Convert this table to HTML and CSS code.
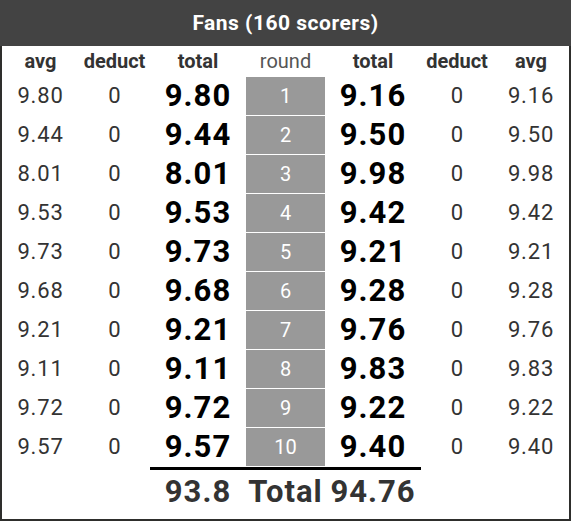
FILE: index.html
```html
<!DOCTYPE html>
<html>
<head>
<meta charset="utf-8">
<link rel="stylesheet" href="styles.css">
</head>
<body>
<div class="card">
  <div class="title">Fans (160 scorers)</div>
  <div class="table">
    <div class="th">avg</div>
    <div class="th">deduct</div>
    <div class="th">total</div>
    <div class="th light">round</div>
    <div class="th">total</div>
    <div class="th">deduct</div>
    <div class="th">avg</div>

    <div class="avg">9.80</div><div class="ded">0</div><div class="tot">9.80</div><div class="rnd">1</div><div class="tot">9.16</div><div class="ded">0</div><div class="avg">9.16</div>
    <div class="avg">9.44</div><div class="ded">0</div><div class="tot">9.44</div><div class="rnd">2</div><div class="tot">9.50</div><div class="ded">0</div><div class="avg">9.50</div>
    <div class="avg">8.01</div><div class="ded">0</div><div class="tot">8.01</div><div class="rnd">3</div><div class="tot">9.98</div><div class="ded">0</div><div class="avg">9.98</div>
    <div class="avg">9.53</div><div class="ded">0</div><div class="tot">9.53</div><div class="rnd">4</div><div class="tot">9.42</div><div class="ded">0</div><div class="avg">9.42</div>
    <div class="avg">9.73</div><div class="ded">0</div><div class="tot">9.73</div><div class="rnd">5</div><div class="tot">9.21</div><div class="ded">0</div><div class="avg">9.21</div>
    <div class="avg">9.68</div><div class="ded">0</div><div class="tot">9.68</div><div class="rnd">6</div><div class="tot">9.28</div><div class="ded">0</div><div class="avg">9.28</div>
    <div class="avg">9.21</div><div class="ded">0</div><div class="tot">9.21</div><div class="rnd">7</div><div class="tot">9.76</div><div class="ded">0</div><div class="avg">9.76</div>
    <div class="avg">9.11</div><div class="ded">0</div><div class="tot">9.11</div><div class="rnd">8</div><div class="tot">9.83</div><div class="ded">0</div><div class="avg">9.83</div>
    <div class="avg">9.72</div><div class="ded">0</div><div class="tot">9.72</div><div class="rnd">9</div><div class="tot">9.22</div><div class="ded">0</div><div class="avg">9.22</div>
    <div class="avg">9.57</div><div class="ded">0</div><div class="tot">9.57</div><div class="rnd">10</div><div class="tot">9.40</div><div class="ded">0</div><div class="avg">9.40</div>

    <div class="blank"></div><div class="blank"></div>
    <div class="sum">93.8</div><div class="sum">Total</div><div class="sum">94.76</div>
    <div class="blank"></div><div class="blank"></div>
  </div>
</div>
</body>
</html>
```
FILE: styles.css
```css
html, body {
  margin: 0;
  padding: 0;
  background: #fff;
}
.card {
  width: 571px;
  box-sizing: border-box;
  border: 2px solid #2e2e2c;
  border-top: 0;
  font-family: Roboto, "Liberation Sans", sans-serif;
}
.title {
  height: 46px;
  line-height: 46px;
  background: #434343;
  color: #fff;
  font-weight: 700;
  font-size: 21px;
  letter-spacing: 0.5px;
  text-align: center;
  margin: 0 -2px;
}
.table {
  display: grid;
  grid-template-columns: 77px 71px 96px 79px 96px 72px 76px;
  grid-template-rows: 30px repeat(10, 38px) 52px;
  row-gap: 1px;
  text-align: center;
}
.th {
  font-weight: 700;
  font-size: 20px;
  line-height: 30px;
  color: #333;
}
.th.light {
  font-weight: 400;
  color: #555;
}
.avg, .ded {
  font-size: 22px;
  line-height: 38px;
  color: #333;
}
.avg {
  letter-spacing: 0.8px;
}
.tot {
  font-size: 31px;
  font-weight: 700;
  letter-spacing: 1px;
  line-height: 38px;
  color: #000;
}
.rnd {
  background: #999;
  color: #fff;
  font-size: 20px;
  line-height: 38px;
}
.sum {
  border-top: 3px solid #000;
  font-size: 31px;
  font-weight: 700;
  letter-spacing: 1px;
  color: #333;
  line-height: 44px;
}
```
